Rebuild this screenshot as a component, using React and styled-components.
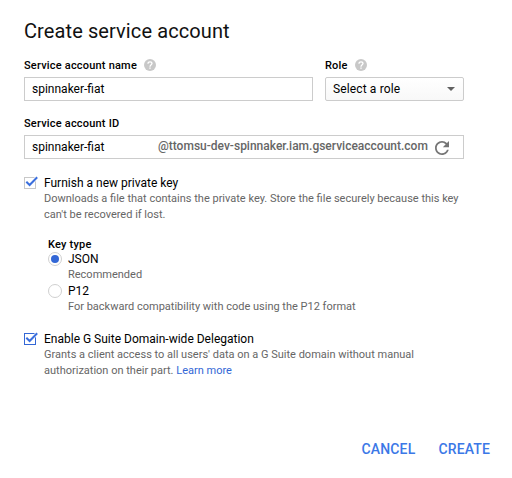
import React, { useState } from "react";
import styled, { createGlobalStyle } from "styled-components";

const GlobalStyle = createGlobalStyle`
  * { box-sizing: border-box; }
  body {
    margin: 0;
    background: #fff;
    color: #000;
    font: 400 12px/16px Roboto, sans-serif;
  }
`;

const Dialog = styled.form`
  width: 512px;
  height: 478px;
  padding: 16px 12px 0 24px;
  display: flex;
  flex-direction: column;
`;

const Title = styled.h1`
  margin: 0 0 12px;
  font-size: 20px;
  font-weight: 400;
  line-height: 30px;
  letter-spacing: 0.1px;
  color: #111;
`;

const FieldRow = styled.div`
  display: flex;
  gap: 12px;
  margin-bottom: 15px;
`;

const Field = styled.div`
  width: ${(p) => p.$width}px;
`;

const Label = styled.div`
  display: flex;
  align-items: center;
  gap: 7px;
  height: 16px;
  margin-bottom: 3px;
  font-size: 11px;
  font-weight: 500;
  letter-spacing: 0.2px;
  color: #000;
`;

const Help = styled.svg`
  width: 12px;
  height: 12px;
  margin-top: -2px;
  flex: none;
`;

const TextBox = styled.div`
  display: flex;
  align-items: center;
  height: 24px;
  padding: 0 7px;
  border: 1px solid #ccc;
  background: #fff;
`;

const TextInput = styled.input`
  width: ${(p) => p.$width || "100%"};
  padding: 0;
  border: 0;
  outline: 0;
  background: transparent;
  color: #000;
  font: 400 12px/16px Roboto, sans-serif;
`;

const Suffix = styled.span`
  flex: none;
  padding-bottom: 2px;
  color: #666;
  font-weight: 500;
`;

const Refresh = styled.svg`
  width: 14px;
  height: 14px;
  margin: 2px 0 0 7px;
  flex: none;
`;

const Select = styled.button`
  display: flex;
  align-items: center;
  justify-content: space-between;
  width: 100%;
  height: 24px;
  padding: 0 8px 0 7px;
  border: 1px solid #ccc;
  border-radius: 2px;
  background: linear-gradient(#fff, #f8f8f8);
  color: #000;
  font: 400 12px/16px Roboto, sans-serif;
  letter-spacing: 0.13px;
`;

const Arrow = styled.span`
  border: 4px solid transparent;
  border-top-color: #616161;
  border-bottom: 0;
`;

const Option = styled.div`
  display: flex;
  align-items: flex-start;
  gap: 6px;
`;

const OptionText = styled.div`
  width: 425px;
`;

const OptionTitle = styled.div`
  font-size: 12px;
  line-height: 16px;
`;

const Description = styled.div`
  font-size: 11px;
  line-height: 16px;
  color: #666;
`;

const Check = styled.svg`
  width: 14px;
  height: 14px;
  flex: none;
`;

const Radio = styled.span`
  display: grid;
  place-items: center;
  width: 14px;
  height: 14px;
  margin-top: 1px;
  border: 1px solid #d0d0d0;
  border-radius: 50%;
  flex: none;
  &::after {
    content: "";
    width: 8px;
    height: 8px;
    border-radius: 50%;
    background: ${(p) => (p.$on ? "#3367d6" : "transparent")};
  }
`;

const CheckGroup = styled.div`
  margin-top: 16px;
`;

const KeyTypes = styled.div`
  margin: 16px 0 0 24px;
`;

const KeyHeading = styled.div`
  font-size: 11px;
  font-weight: 500;
  line-height: 12px;
  letter-spacing: 0.2px;
`;

const Link = styled.a`
  color: #3367d6;
  text-decoration: none;
`;

const Actions = styled.div`
  display: flex;
  justify-content: flex-end;
  gap: 3px;
  margin-top: 54px;
`;

const Action = styled.button`
  height: 32px;
  padding: 0 10px;
  border: 0;
  background: none;
  color: #3b78e7;
  font: 500 14px/32px Roboto, sans-serif;
  letter-spacing: 0.15px;
`;

function HelpIcon() {
  return (
    <Help viewBox="0 0 12 12">
      <circle cx="6" cy="6" r="6" fill="#c8c8c8" />
      <path d="M4 4.7C4 3.4 4.9 2.8 6 2.8s2 .7 2 1.8C8 5.8 6 6 6 7.7" fill="none" stroke="#fff" strokeWidth="1.3" />
      <path d="M5.3 8.5h1.4v1.3H5.3z" fill="#fff" />
    </Help>
  );
}

function CheckIcon({ color }) {
  return (
    <Check viewBox="0 0 14 14">
      <rect x=".5" y="2.5" width="11" height="11" fill="#fff" stroke={color} />
      <path d="M2.3 6.7 5.6 10 13.2 2.2" fill="none" stroke="#fff" strokeWidth="3.4" />
      <path d="M2.3 6.7 5.6 10 13.2 2.2" fill="none" stroke="#3b6fdd" strokeWidth="2" />
    </Check>
  );
}

export default function App() {
  const [name, setName] = useState("spinnaker-fiat");
  const [id, setId] = useState("spinnaker-fiat");
  return (
    <>
      <GlobalStyle />
      <Dialog>
        <Title>Create service account</Title>
        <FieldRow>
          <Field $width={289}>
            <Label>Service account name<HelpIcon /></Label>
            <TextBox>
              <TextInput value={name} onChange={(e) => setName(e.target.value)} />
            </TextBox>
          </Field>
          <Field $width={139}>
            <Label>Role<HelpIcon /></Label>
            <Select type="button">Select a role<Arrow /></Select>
          </Field>
        </FieldRow>
        <Field $width={440}>
          <Label>Service account ID</Label>
          <TextBox>
            <TextInput $width="126px" value={id} onChange={(e) => setId(e.target.value)} />
            <Suffix>@ttomsu-dev-spinnaker.iam.gserviceaccount.com</Suffix>
            <Refresh viewBox="4 4 16 16">
              <path
                fill="#757575"
                d="M17.65 6.35C16.2 4.9 14.21 4 12 4c-4.42 0-7.99 3.58-7.99 8s3.57 8 7.99 8c3.73 0 6.84-2.55 7.73-6h-2.08c-.82 2.33-3.04 4-5.65 4-3.31 0-6-2.69-6-6s2.69-6 6-6c1.66 0 3.14.69 4.22 1.78L13 11h7V4l-2.35 2.35z"
              />
            </Refresh>
          </TextBox>
        </Field>
        <CheckGroup>
          <Option>
            <CheckIcon color="#c8c8c8" />
            <OptionText>
              <OptionTitle>Furnish a new private key</OptionTitle>
              <Description>
                Downloads a file that contains the private key. Store the file securely because this key can't be recovered if lost.
              </Description>
            </OptionText>
          </Option>
        </CheckGroup>
        <KeyTypes>
          <KeyHeading>Key type</KeyHeading>
          <Option>
            <Radio $on />
            <div>
              <OptionTitle>JSON</OptionTitle>
              <Description>Recommended</Description>
            </div>
          </Option>
          <Option>
            <Radio />
            <div>
              <OptionTitle>P12</OptionTitle>
              <Description>For backward compatibility with code using the P12 format</Description>
            </div>
          </Option>
        </KeyTypes>
        <CheckGroup>
          <Option>
            <CheckIcon color="#3367d6" />
            <OptionText>
              <OptionTitle>Enable G Suite Domain-wide Delegation</OptionTitle>
              <Description>
                Grants a client access to all users' data on a G Suite domain without manual authorization on their part. <Link href="#">Learn more</Link>
              </Description>
            </OptionText>
          </Option>
        </CheckGroup>
        <Actions>
          <Action type="button">CANCEL</Action>
          <Action type="button">CREATE</Action>
        </Actions>
      </Dialog>
    </>
  );
}
